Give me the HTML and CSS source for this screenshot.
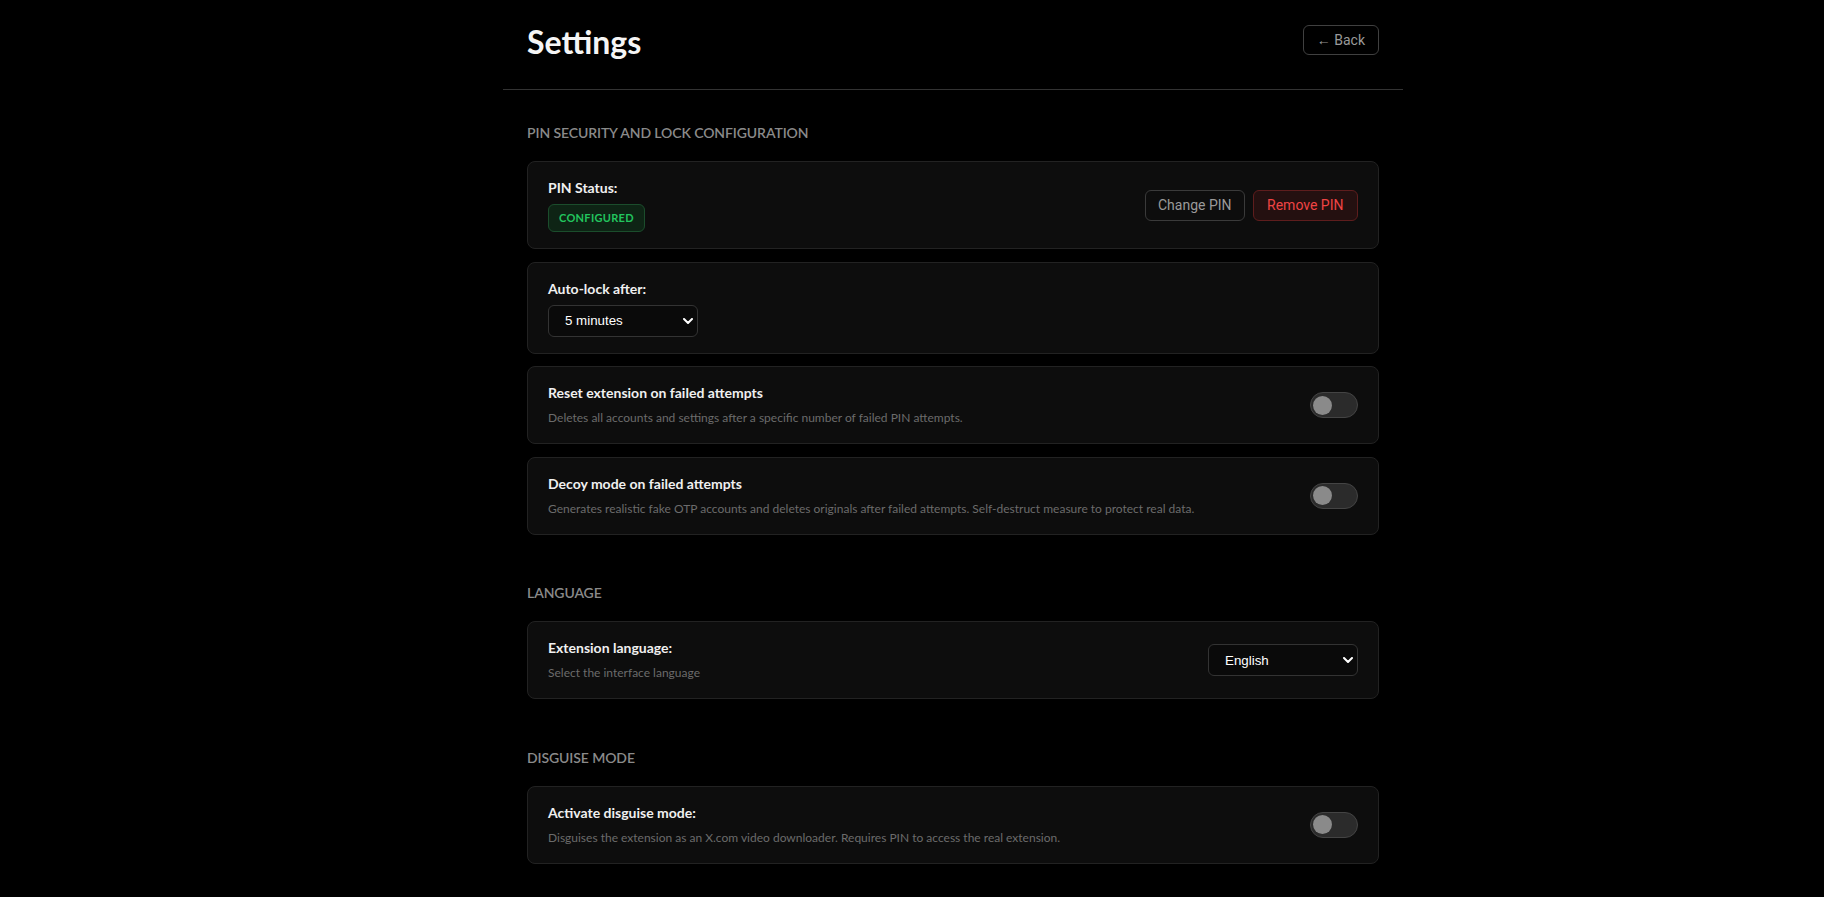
FILE: index.html
```html
<!DOCTYPE html>
<html lang="en">
<head>
<meta charset="utf-8">
<title>Settings</title>
<link rel="stylesheet" href="styles.css">
</head>
<body>
<div class="page">
  <header class="header">
    <h1 class="title">Settings</h1>
    <button class="btn btn-back" type="button">← Back</button>
  </header>
  <main class="content">
    <section class="section">
      <h2 class="section-title">PIN SECURITY AND LOCK CONFIGURATION</h2>
      <div class="card">
        <div class="stack">
          <div class="label">PIN Status:</div>
          <span class="badge">CONFIGURED</span>
        </div>
        <div class="actions">
          <button class="btn" type="button">Change PIN</button>
          <button class="btn btn-danger" type="button">Remove PIN</button>
        </div>
      </div>
      <div class="card">
        <div class="stack">
          <div class="label">Auto-lock after:</div>
          <div class="select-wrap">
            <select class="select">
              <option>5 minutes</option>
              <option>1 minute</option>
              <option>15 minutes</option>
            </select>
            <svg class="chev" width="10" height="6" viewBox="0 0 10 6"><path d="M1 1l4 4 4-4" fill="none" stroke="#fff" stroke-width="2" stroke-linecap="round" stroke-linejoin="round"/></svg>
          </div>
        </div>
      </div>
      <div class="card">
        <div class="stack">
          <div class="label">Reset extension on failed attempts</div>
          <div class="desc">Deletes all accounts and settings after a specific number of failed PIN attempts.</div>
        </div>
        <div class="toggle"><span class="knob"></span></div>
      </div>
      <div class="card">
        <div class="stack">
          <div class="label">Decoy mode on failed attempts</div>
          <div class="desc">Generates realistic fake OTP accounts and deletes originals after failed attempts. Self-destruct measure to protect real data.</div>
        </div>
        <div class="toggle"><span class="knob"></span></div>
      </div>
    </section>

    <section class="section">
      <h2 class="section-title">LANGUAGE</h2>
      <div class="card">
        <div class="stack">
          <div class="label">Extension language:</div>
          <div class="desc">Select the interface language</div>
        </div>
        <div class="select-wrap">
          <select class="select">
            <option>English</option>
            <option>Español</option>
          </select>
          <svg class="chev" width="10" height="6" viewBox="0 0 10 6"><path d="M1 1l4 4 4-4" fill="none" stroke="#fff" stroke-width="2" stroke-linecap="round" stroke-linejoin="round"/></svg>
        </div>
      </div>
    </section>

    <section class="section">
      <h2 class="section-title">DISGUISE MODE</h2>
      <div class="card">
        <div class="stack">
          <div class="label">Activate disguise mode:</div>
          <div class="desc">Disguises the extension as an X.com video downloader. Requires PIN to access the real extension.</div>
        </div>
        <div class="toggle"><span class="knob"></span></div>
      </div>
    </section>
  </main>
</div>
</body>
</html>
```

FILE: styles.css
```css
* { box-sizing: border-box; }

html, body {
  background: #000;
}

body {
  margin: 0;
  padding-left: 82px;
  font-family: Lato, "Open Sans", sans-serif;
  color: #f0f0f0;
}

.page {
  width: 900px;
  margin: 0 auto;
}

.header {
  display: flex;
  align-items: center;
  justify-content: space-between;
  height: 90px;
  padding: 20px 24px 29px;
  border-bottom: 1px solid #333;
}

.title {
  margin: 4px 0 0;
  font-size: 32px;
  font-weight: 700;
  line-height: 40px;
  color: #f5f5f5;
}

.content {
  padding: 33px 24px 24px;
}

.section {
  margin-bottom: 48.5px;
}

.section-title {
  margin: 0 0 18px;
  font-size: 14px;
  font-weight: 600;
  line-height: 20px;
  letter-spacing: -0.1px;
  color: #8a8a8a;
}

.card {
  display: flex;
  align-items: center;
  justify-content: space-between;
  background: #0d0d0d;
  border: 1px solid #222;
  border-radius: 8px;
  padding: 16px 20px;
  margin-bottom: 12.5px;
}

.card:last-child {
  margin-bottom: 0;
}

.stack {
  display: flex;
  flex-direction: column;
  align-items: flex-start;
}

.label {
  font-size: 14px;
  font-weight: 700;
  line-height: 20px;
  color: #f0f0f0;
  margin-bottom: 6px;
}

.desc {
  font-size: 12px;
  line-height: 18px;
  color: #6b6b6b;
}

.badge {
  display: inline-block;
  height: 28px;
  padding: 0 10px;
  font-size: 11px;
  font-weight: 700;
  letter-spacing: 0.3px;
  line-height: 26px;
  color: #22c55e;
  background: #0e2415;
  border: 1px solid #1b4d2c;
  border-radius: 6px;
}

.actions {
  display: flex;
  gap: 8px;
}

.btn {
  height: 31px;
  padding: 0 12px;
  font-family: Roboto, "Liberation Sans", sans-serif;
  font-size: 14px;
  color: #9a9a9a;
  background: transparent;
  border: 1px solid #3a3a3a;
  border-radius: 6px;
  cursor: pointer;
}

.btn-danger {
  padding: 0 13.5px;
  color: #ef4444;
  background: #241010;
  border-color: #5e1d1d;
}

.btn-back {
  height: 30px;
  padding: 0 13px;
  border-color: #404040;
}

.select-wrap {
  position: relative;
  width: 150px;
}

.select {
  display: block;
  width: 100%;
  height: 32px;
  padding: 0 28px 0 16px;
  appearance: none;
  -webkit-appearance: none;
  font-family: "Liberation Sans", Arial, sans-serif;
  font-size: 13.33px;
  color: #fff;
  background: #0a0a0a;
  border: 1px solid #333;
  border-radius: 6px;
}

.chev {
  position: absolute;
  right: 5px;
  top: 13px;
  pointer-events: none;
}

.toggle {
  display: flex;
  align-items: center;
  flex-shrink: 0;
  width: 48px;
  height: 26px;
  padding: 0 2px;
  background: #2b2b2b;
  border: 1px solid #444;
  border-radius: 13px;
}

.knob {
  width: 19px;
  height: 19px;
  border-radius: 50%;
  background: #8a8a8a;
}
```
